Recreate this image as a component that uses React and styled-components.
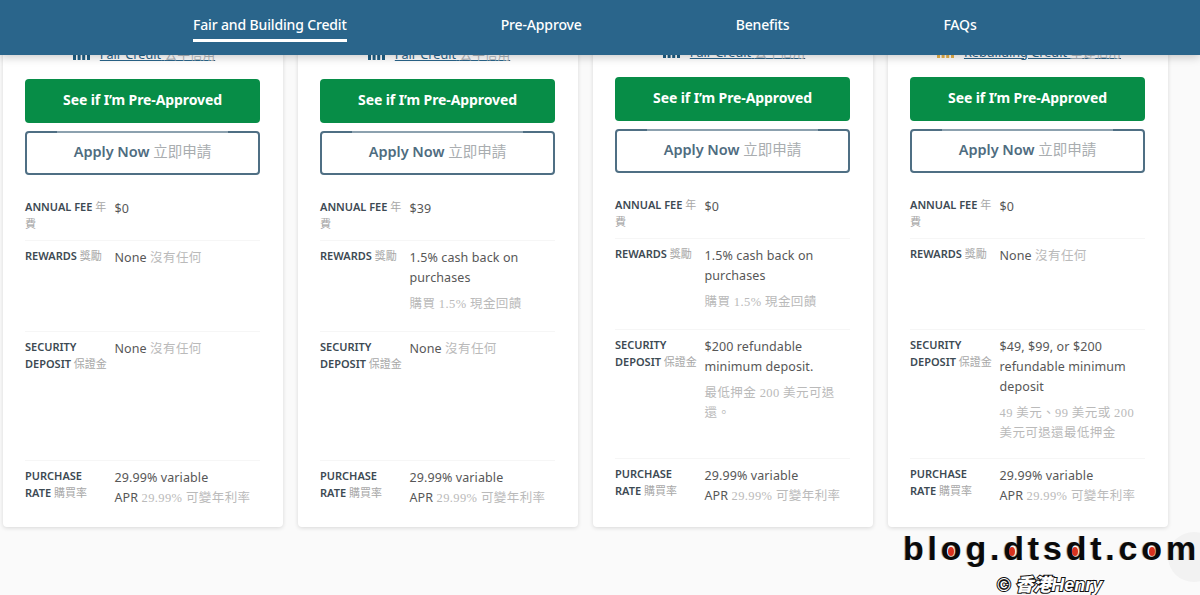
import styled, { createGlobalStyle } from "styled-components";

const cjk = `"Noto Sans CJK TC", sans-serif`;

const GlobalStyle = createGlobalStyle`
  html, body {
    margin: 0;
    padding: 0;
    background: #fafafa;
  }
`;

const Page = styled.div`
  position: relative;
  width: 1200px;
  height: 595px;
  overflow: hidden;
  background: #fafafa;
  font-family: "Noto Sans", ${cjk};
`;

const Header = styled.header`
  position: absolute;
  top: 0;
  left: 0;
  right: 0;
  height: 55px;
  z-index: 2;
  background: #2a658b;
  box-shadow: 0 2px 9px rgba(0, 0, 0, 0.22);
`;

const Tabs = styled.nav`
  display: flex;
  gap: 154px;
  padding-left: 193px;
`;

const Tab = styled.div`
  height: 39px;
  line-height: 49px;
  font-size: 14px;
  letter-spacing: -0.15px;
  font-weight: 500;
  color: #fff;
  border-bottom: 3px solid ${(p) => (p.$active ? "#fff" : "transparent")};
`;

const CardRow = styled.div`
  display: flex;
  align-items: stretch;
  gap: 15px;
  padding: 32px 0 0 3px;
`;

const CardBox = styled.article`
  width: 280px;
  box-sizing: border-box;
  padding: 12px 23px 0 22px;
  margin-top: ${(p) => (p.$lift ? "-2px" : "0")};
  background: #fff;
  border-radius: 4px;
  box-shadow: 0 1px 4px rgba(0, 0, 0, 0.14);
`;

const CreditRow = styled.div`
  display: flex;
  align-items: center;
  justify-content: center;
  gap: 10px;
  height: 18px;
  margin: 0 0 17px 3px;
`;

const CreditLink = styled.span`
  font-size: 12.7px;
  color: #2a658b;
  text-decoration: underline;
  span {
    color: #b4b9bd;
  }
`;

const PrimaryButton = styled.div`
  height: 44px;
  line-height: 42px;
  text-align: center;
  border-radius: 4px;
  background: #078d47;
  color: #fff;
  font-size: 14px;
  letter-spacing: -0.1px;
  font-weight: 700;
`;

const OutlineButton = styled.div`
  position: relative;
  box-sizing: border-box;
  height: 44px;
  line-height: 36px;
  margin-top: 8px;
  text-align: center;
  border: 2px solid #4f6f84;
  border-radius: 4px;
  color: #4f6c7f;
  font-size: 14.5px;
  font-weight: 600;
  span {
    color: #a9adb0;
    font-weight: 400;
  }
  &::before {
    content: "";
    position: absolute;
    top: -4px;
    left: 30px;
    right: 30px;
    height: 5px;
    background: rgba(255, 255, 255, 0.35);
  }
`;

const Specs = styled.div`
  margin-top: 17px;
`;

const SpecRow = styled.div`
  display: grid;
  grid-template-columns: 89.5px 1fr;
  box-sizing: border-box;
  height: ${(p) => p.$height}px;
  padding-top: 7px;
  border-bottom: ${(p) => (p.$last ? "none" : "1px solid #f6f6f6")};
`;

const SpecLabel = styled.div`
  font-size: 11px;
  font-weight: 600;
  line-height: 16.5px;
  padding-right: 5px;
  color: #3d4a53;
  span {
    font-size: 11px;
    letter-spacing: 0;
    color: #a8a8a8;
  }
`;

const SpecValue = styled.div`
  font-size: 12.5px;
  line-height: 20px;
  letter-spacing: 0.1px;
  color: #575757;
`;

const Zh = styled.span`
  color: #bababa;
  font-family: "Liberation Serif", ${cjk};
  font-weight: 400;
  letter-spacing: 0.4px;
`;

const NoteLine = styled(Zh)`
  display: block;
  margin-top: 6px;
`;

const ChatBubble = styled.div`
  position: absolute;
  top: 532px;
  left: 1168px;
  width: 52px;
  height: 50px;
  border-radius: 50%;
  background: #f2f2f2;
`;

const Watermark = styled.div`
  position: absolute;
  top: 527px;
  left: 903px;
  width: 297px;
  z-index: 3;
`;

const SiteName = styled.div`
  font-family: "Liberation Sans", sans-serif;
  font-size: 34px;
  font-weight: 700;
  line-height: 42px;
  letter-spacing: 3.8px;
  white-space: nowrap;
  color: #0a0a0a;
  text-shadow: -1px 0 0 #bbb;
`;

const Letter = styled.span`
  position: relative;
  &::after {
    content: ${(p) => (p.$dot ? '""' : "none")};
    position: absolute;
    left: calc(${(p) => p.$dot}% - 3px);
    top: 18px;
    width: 6px;
    height: 9px;
    border-radius: 50%;
    background: #d8321f;
  }
`;

const Signature = styled.div`
  margin: 5px 0 0 94px;
  font-family: "Liberation Sans", ${cjk};
  font-size: 18px;
  font-style: italic;
  font-weight: 900;
  line-height: 22px;
  white-space: nowrap;
  color: #fff;
  -webkit-text-stroke: 2px #111;
  paint-order: stroke fill;
`;

const tabs = ["Fair and Building Credit", "Pre-Approve", "Benefits", "FAQs"];
const watermark = [
  ["b"], ["l"], ["o", 42], ["g"], ["."], ["d", 36], ["t"], ["s"], ["d", 36], ["t"], ["."], ["c"], ["o", 42], ["m"],
];

const none = (
  <>
    None <Zh>沒有任何</Zh>
  </>
);
const apr = (
  <>
    29.99% variable
    <br />
    APR <Zh>29.99% 可變年利率</Zh>
  </>
);
const cashBack = (
  <>
    1.5% cash back on purchases
    <NoteLine>購買 1.5% 現金回饋</NoteLine>
  </>
);

const cards = [
  { credit: "Fair Credit", creditZh: "公平信用", barColor: "#1f5f85", fee: "$0", rewards: none, deposit: none },
  { credit: "Fair Credit", creditZh: "公平信用", barColor: "#1f5f85", fee: "$39", rewards: cashBack, deposit: none },
  {
    credit: "Fair Credit",
    creditZh: "公平信用",
    barColor: "#1f5f85",
    lift: true,
    fee: "$0",
    rewards: cashBack,
    deposit: (
      <>
        $200 refundable minimum deposit.
        <NoteLine>最低押金 200 美元可退還。</NoteLine>
      </>
    ),
  },
  {
    credit: "Rebuilding Credit",
    creditZh: "重建信用",
    barColor: "#e9b44c",
    lift: true,
    fee: "$0",
    rewards: none,
    deposit: (
      <>
        $49, $99, or $200 refundable minimum deposit
        <NoteLine>49 美元、99 美元或 200 美元可退還最低押金</NoteLine>
      </>
    ),
  },
];

function CreditBars({ color }) {
  return (
    <svg width="17" height="14" viewBox="0 0 17 14" fill={color}>
      <rect x="0" y="4" width="3" height="10" />
      <rect x="4.6" y="2" width="3" height="12" />
      <rect x="9.2" y="0" width="3" height="14" />
      <rect x="14" y="0" width="3" height="14" />
    </svg>
  );
}

function Card({ card }) {
  return (
    <CardBox $lift={card.lift}>
      <CreditRow>
        <CreditBars color={card.barColor} />
        <CreditLink>
          {card.credit} <span>{card.creditZh}</span>
        </CreditLink>
      </CreditRow>
      <PrimaryButton>See if I’m Pre-Approved</PrimaryButton>
      <OutlineButton>
        Apply Now <span>立即申請</span>
      </OutlineButton>
      <Specs>
        <SpecRow $height={49}>
          <SpecLabel>
            ANNUAL FEE <Zh>年費</Zh>
          </SpecLabel>
          <SpecValue>{card.fee}</SpecValue>
        </SpecRow>
        <SpecRow $height={91}>
          <SpecLabel>
            REWARDS <Zh>獎勵</Zh>
          </SpecLabel>
          <SpecValue>{card.rewards}</SpecValue>
        </SpecRow>
        <SpecRow $height={129}>
          <SpecLabel>
            SECURITY DEPOSIT <Zh>保證金</Zh>
          </SpecLabel>
          <SpecValue>{card.deposit}</SpecValue>
        </SpecRow>
        <SpecRow $height={66} $last>
          <SpecLabel>
            PURCHASE RATE <Zh>購買率</Zh>
          </SpecLabel>
          <SpecValue>{apr}</SpecValue>
        </SpecRow>
      </Specs>
    </CardBox>
  );
}

export default function App() {
  return (
    <Page>
      <GlobalStyle />
      <Header>
        <Tabs>
          {tabs.map((tab, i) => (
            <Tab key={tab} $active={i === 0}>
              {tab}
            </Tab>
          ))}
        </Tabs>
      </Header>
      <CardRow>
        {cards.map((card, i) => (
          <Card key={i} card={card} />
        ))}
      </CardRow>
      <ChatBubble />
      <Watermark>
        <SiteName>
          {watermark.map(([ch, dot], i) => (
            <Letter key={i} $dot={dot}>
              {ch}
            </Letter>
          ))}
        </SiteName>
        <Signature>© 香港Henry</Signature>
      </Watermark>
    </Page>
  );
}
